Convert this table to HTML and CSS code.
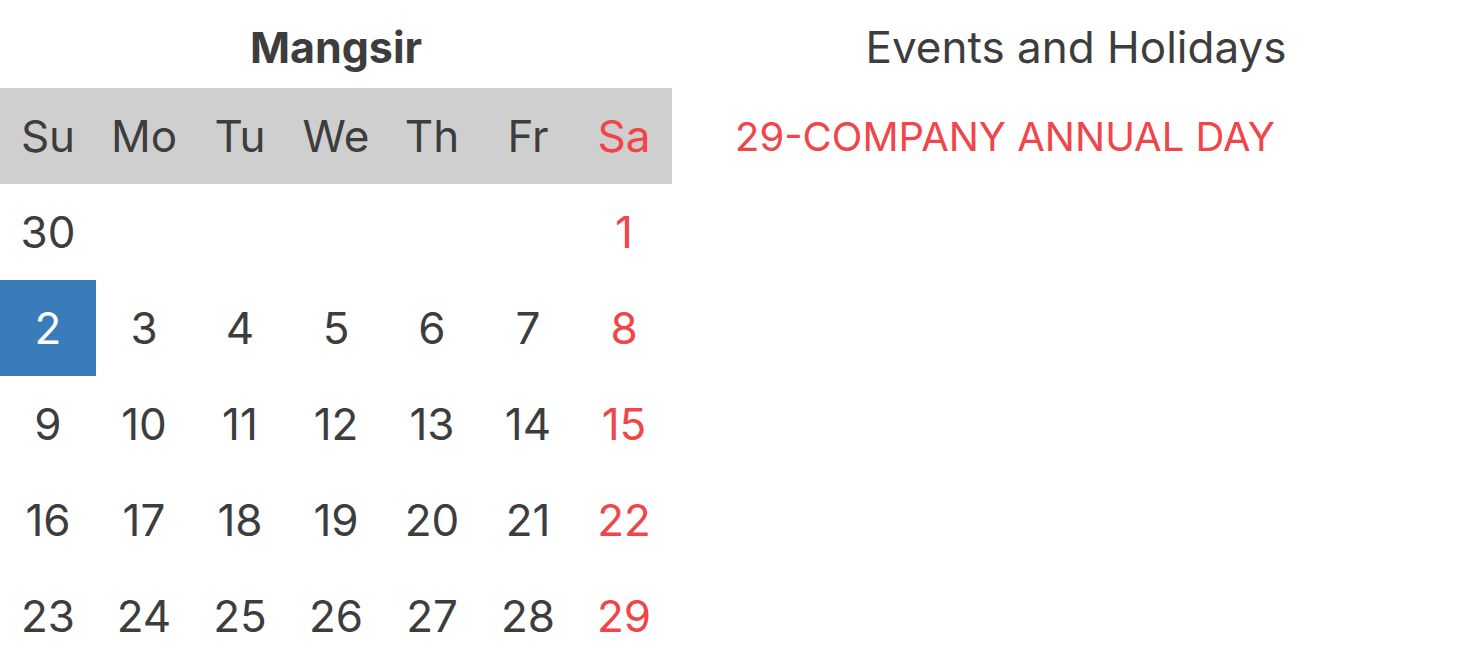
FILE: index.html
```html
<!DOCTYPE html>
<html>
<head>
<meta charset="utf-8">
<link rel="stylesheet" href="styles.css">
</head>
<body>
<div class="page">
  <section class="calendar">
    <div class="month">Mangsir</div>
    <div class="grid weekdays">
      <div>Su</div><div>Mo</div><div>Tu</div><div>We</div><div>Th</div><div>Fr</div><div class="sat">Sa</div>
    </div>
    <div class="grid days">
      <div>30</div><div></div><div></div><div></div><div></div><div></div><div class="sat">1</div>
      <div class="today">2</div><div>3</div><div>4</div><div>5</div><div>6</div><div>7</div><div class="sat">8</div>
      <div>9</div><div>10</div><div>11</div><div>12</div><div>13</div><div>14</div><div class="sat">15</div>
      <div>16</div><div>17</div><div>18</div><div>19</div><div>20</div><div>21</div><div class="sat">22</div>
      <div>23</div><div>24</div><div>25</div><div>26</div><div>27</div><div>28</div><div class="sat">29</div>
    </div>
  </section>
  <section class="events">
    <div class="events-title">Events and Holidays</div>
    <ul class="event-list">
      <li class="event holiday">29-COMPANY ANNUAL DAY</li>
    </ul>
  </section>
</div>
</body>
</html>
```
FILE: styles.css
```css
html, body {
  margin: 0;
  padding: 0;
  background: #fff;
}
body {
  font-family: Inter, "Noto Sans", sans-serif;
  color: #3d3d3d;
}
.page {
  display: flex;
  width: 1460px;
  height: 664px;
  overflow: hidden;
}
.calendar {
  width: 672px;
  flex: none;
}
.month {
  height: 88px;
  display: flex;
  align-items: center;
  justify-content: center;
  font-size: 43px;
  font-weight: 700;
  padding-top: 6px;
  box-sizing: border-box;
}
.grid {
  display: grid;
  grid-template-columns: repeat(7, 96px);
  grid-auto-rows: 96px;
}
.grid > div {
  display: flex;
  align-items: center;
  justify-content: center;
  font-size: 44px;
}
.weekdays {
  background: #d0cfd0;
}
.sat {
  color: #f04549;
}
.today {
  background: #3a7bba;
  color: #fff;
}
.events {
  flex: 1;
  padding-left: 20px;
}
.events-title {
  height: 88px;
  display: flex;
  align-items: center;
  justify-content: center;
  font-size: 44px;
  padding-top: 6px;
  box-sizing: border-box;
}
.event-list {
  list-style: none;
  margin: 0;
  padding: 0 0 0 43px;
}
.event {
  height: 96px;
  display: flex;
  align-items: center;
  font-size: 40px;
}
.holiday {
  color: #f04549;
}
```
